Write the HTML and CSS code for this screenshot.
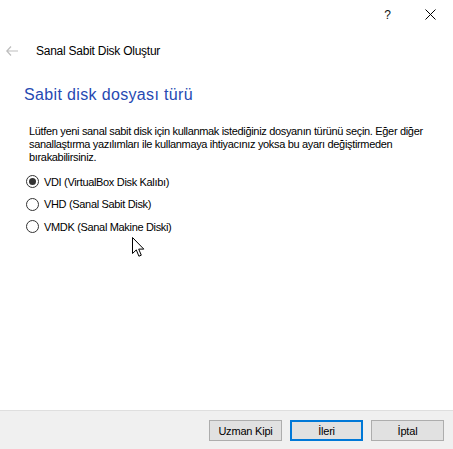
FILE: index.html
```html
<!DOCTYPE html>
<html lang="tr">
<head>
<meta charset="utf-8">
<link rel="stylesheet" href="styles.css">
</head>
<body>
<div class="window">
  <div class="titlebar">
    <span class="help">?</span>
    <svg class="close" width="11" height="11" viewBox="0 0 11 11"><path d="M0.5 0.5L10.5 10.5M10.5 0.5L0.5 10.5" stroke="#000" stroke-width="1" fill="none"/></svg>
  </div>
  <div class="header">
    <svg class="back" width="12" height="10" viewBox="0 0 12 10"><path d="M5 0.5L0.8 5L5 9.5M0.8 5H12" stroke="#bdbdbd" stroke-width="1.2" fill="none"/></svg>
    <span class="wtitle">Sanal Sabit Disk Oluştur</span>
  </div>
  <div class="content">
    <h1 class="heading">Sabit disk dosyası türü</h1>
    <p class="desc">Lütfen yeni sanal sabit disk için kullanmak istediğiniz dosyanın türünü seçin. Eğer diğer sanallaştırma yazılımları ile kullanmaya ihtiyacınız yoksa bu ayarı değiştirmeden bırakabilirsiniz.</p>
    <div class="options">
      <div class="opt"><span class="radio checked"></span><span class="lbl">VDI (VirtualBox Disk Kalıbı)</span></div>
      <div class="opt"><span class="radio"></span><span class="lbl">VHD (Sanal Sabit Disk)</span></div>
      <div class="opt"><span class="radio"></span><span class="lbl">VMDK (Sanal Makine Diski)</span></div>
    </div>
  </div>
  <div class="footer">
    <button class="btn">Uzman Kipi</button>
    <button class="btn default">İleri</button>
    <button class="btn">İptal</button>
  </div>
  <svg class="cursor" width="13" height="21" viewBox="0 0 13 21"><path d="M0.5 0.5V16.5L4.3 12.9L6.9 19.2L9.3 18.2L6.7 12.1H11.8Z" fill="#fff" stroke="#000" stroke-width="1" stroke-linejoin="miter"/></svg>
</div>
</body>
</html>
```
FILE: styles.css
```css
html,body{margin:0;padding:0;background:#fff}
body{width:453px;height:449px;overflow:hidden;font-family:"Liberation Sans",Arial,sans-serif;color:#000}
.window{position:relative;width:453px;height:449px;display:flex;flex-direction:column}
.titlebar{height:30px;display:flex;align-items:center;justify-content:flex-end;padding-right:17px;box-sizing:border-box}
.help{font-size:12px;margin-right:34px;margin-top:-1px;color:#111}
.close{display:block;margin-top:-2px}
.header{height:38px;display:flex;align-items:center;padding-left:6px;margin-top:2px}
.back{display:block;margin-right:18px}
.wtitle{font-size:12px;letter-spacing:-0.25px}
.content{flex:1;padding:0 0 0 24px}
.heading{margin:15px 0 0 0;font-weight:normal;font-size:16px;color:#2649b2;letter-spacing:0.35px;line-height:20px}
.desc{margin:20px 30px 0 5px;font-size:11px;line-height:13px;letter-spacing:-0.33px}
.options{margin-top:11px;padding-left:2px;display:flex;flex-direction:column;gap:9.5px}
.opt{display:flex;align-items:center;height:13px}
.radio{width:11px;height:11px;border:1px solid #333;border-radius:50%;box-sizing:content-box;display:flex;align-items:center;justify-content:center;margin-right:5px;background:#fff}
.radio.checked::after{content:"";width:7px;height:7px;border-radius:50%;background:#333}
.lbl{font-size:11px;letter-spacing:-0.33px}
.footer{height:29px;border-top:1px solid #dfdfdf;background:#f0f0f0;display:flex;justify-content:flex-end;align-items:flex-start;padding:9px 9px 0 0;box-sizing:content-box;gap:8px;flex:none}
.btn{width:73px;height:21px;margin:0;padding:0;border:1px solid #adadad;background:#e1e1e1;font-family:"Liberation Sans",Arial,sans-serif;font-size:11px;letter-spacing:-0.2px;color:#000;box-sizing:border-box}
.btn.default{border:2px solid #0078d7}
.cursor{position:absolute;left:132px;top:237px}
```
